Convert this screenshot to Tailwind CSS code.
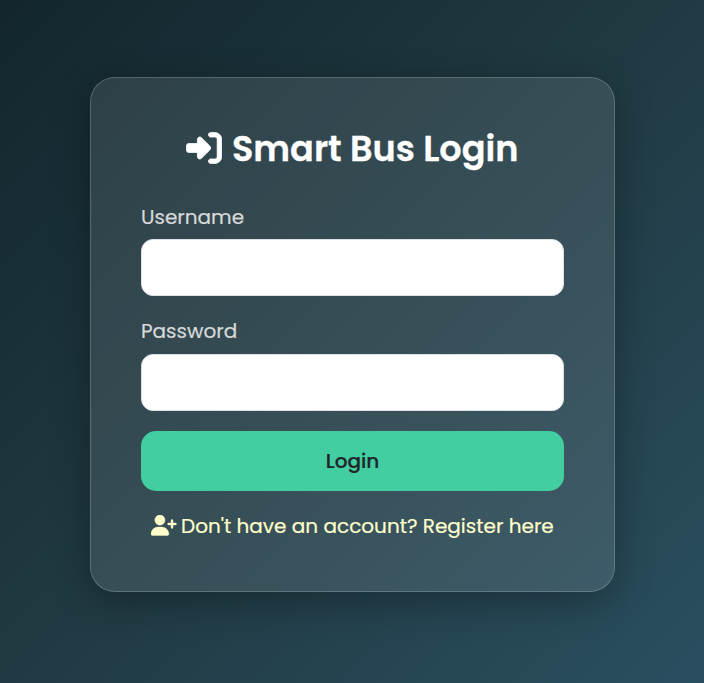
<!DOCTYPE html>
<html lang="en">
<head>
<meta charset="UTF-8">
<title>Smart Bus Login</title>
<script src="https://cdn.jsdelivr.net/npm/@tailwindcss/browser@4"></script>
</head>
<body class="h-[683px] overflow-hidden bg-[linear-gradient(135deg,#13262d,#203a43_50%,#2a4f60)] pt-[77px] pl-[90px] font-[Poppins,Inter,sans-serif]">
<main class="flex h-[515px] w-[525px] flex-col rounded-[25px] border border-white/20 bg-white/10 px-[50px] pt-[46px] shadow-[0_10px_38px_rgba(0,0,0,0.3)]">
  <h1 class="flex h-[50px] items-center gap-[10px] pl-[45px] text-[35.1px] font-semibold whitespace-nowrap text-white [-webkit-text-stroke:0.3px_#fff]">
    <svg class="-mt-[2px] h-[36px] w-[36px] shrink-0" viewBox="-6 0 524 512" fill="currentColor" stroke="currentColor" stroke-width="12" stroke-linejoin="round"><path d="M217.9 105.9L340.7 228.7c7.2 7.2 11.3 17.1 11.3 27.3s-4.1 20.1-11.3 27.3L217.9 406.1c-6.4 6.4-15 9.9-24 9.9c-18.7 0-33.9-15.2-33.9-33.9l0-62.1L32 320c-17.7 0-32-14.3-32-32l0-64c0-17.7 14.3-32 32-32l128 0 0-62.1c0-18.7 15.2-33.9 33.9-33.9c9 0 17.6 3.6 24 9.9zM352 416l64 0c17.7 0 32-14.3 32-32l0-256c0-17.7-14.3-32-32-32l-64 0c-17.7 0-32-14.3-32-32s14.3-32 32-32l64 0c53 0 96 43 96 96l0 256c0 53-43 96-96 96l-64 0c-17.7 0-32-14.3-32-32s14.3-32 32-32z"/></svg>
    <span>Smart Bus Login</span>
  </h1>
  <form class="mt-[28px] flex flex-col">
    <label for="username" class="h-[30px] text-[20px] leading-[30px] text-[#d8d9da] [-webkit-text-stroke:0.2px_#d8d9da]"><span>Username</span></label>
    <input id="username" type="text" class="mt-[7px] h-[57px] rounded-xl border border-[#dee2e6] bg-white px-4 outline-none">
    <label for="password" class="mt-[20px] h-[30px] text-[20px] leading-[30px] text-[#d8d9da] [-webkit-text-stroke:0.2px_#d8d9da]"><span>Password</span></label>
    <input id="password" type="password" class="mt-[8px] h-[57px] rounded-xl border border-[#dee2e6] bg-white px-4 outline-none">
    <button type="button" class="mt-[20px] h-[60px] rounded-[15px] bg-[#43cea2] text-[20px] font-medium text-[#212529] [-webkit-text-stroke:0.2px_#212529]"><span>Login</span></button>
  </form>
  <a class="mt-[20px] flex h-[30px] items-center gap-[4.5px] pl-[10px] text-[20px] whitespace-nowrap text-[#ffffcc] [-webkit-text-stroke:0.2px_#ffffcc]">
    <svg class="-mt-px h-[20.4px] w-[25.5px] shrink-0" viewBox="0 0 640 512" fill="currentColor" stroke="currentColor" stroke-width="10"><path d="M96 128a128 128 0 1 1 256 0A128 128 0 1 1 96 128zM0 482.3C0 383.8 79.8 304 178.3 304l91.4 0C368.2 304 448 383.8 448 482.3c0 16.4-13.3 29.7-29.7 29.7L29.7 512C13.3 512 0 498.7 0 482.3zM504 312l0-64-64 0c-13.3 0-24-10.7-24-24s10.7-24 24-24l64 0 0-64c0-13.3 10.7-24 24-24s24 10.7 24 24l0 64 64 0c13.3 0 24 10.7 24 24s-10.7 24-24 24l-64 0 0 64c0 13.3-10.7 24-24 24s-24-10.7-24-24z"/></svg>
    <span>Don't have an account? Register here</span>
  </a>
</main>
</body>
</html>
